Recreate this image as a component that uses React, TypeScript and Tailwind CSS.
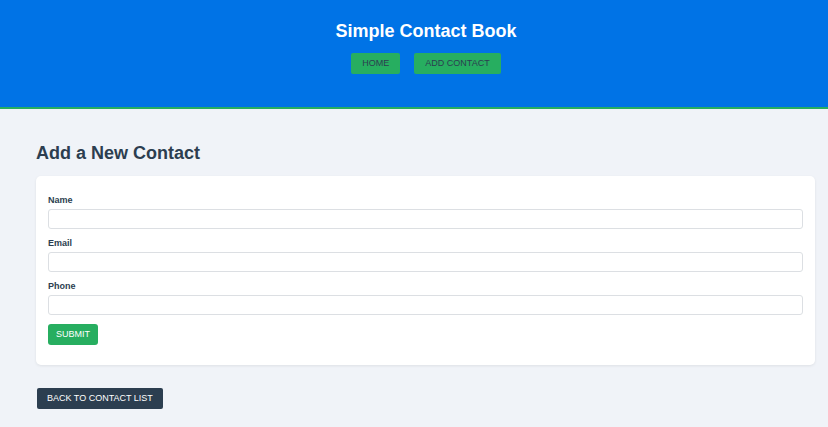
import { useState } from "react";

export default function App() {
  const [form, setForm] = useState({ name: "", email: "", phone: "" });

  const fields: { key: keyof typeof form; label: string; type: string }[] = [
    { key: "name", label: "Name", type: "text" },
    { key: "email", label: "Email", type: "email" },
    { key: "phone", label: "Phone", type: "tel" },
  ];

  return (
    <div
      className="min-h-[427px] bg-[#f0f3f8] text-[#2c3e50]"
      style={{ fontFamily: '"Liberation Sans", Arial, sans-serif' }}
    >
      {/* Header */}
      <header className="bg-[#0073e6] border-b-2 border-[#27ae60] pl-[24px] pt-[20px] pb-[33px] flex flex-col items-center">
        <h1 className="text-[18px] leading-[22px] font-bold text-white">
          Simple Contact Book
        </h1>
        <nav className="mt-[11px] flex gap-[14px]">
          <button className="h-[21px] px-[11px] bg-[#27ae60] rounded-[2px] text-[9px] uppercase text-[#2c3e50]">
            Home
          </button>
          <button className="h-[21px] px-[11px] bg-[#27ae60] rounded-[2px] text-[9px] uppercase text-[#2c3e50]">
            Add Contact
          </button>
        </nav>
      </header>

      {/* Main */}
      <main className="pl-[36px] pr-[13px] pt-[33px] pb-[18px]">
        <h2 className="text-[18px] leading-[22px] font-bold mb-[12px]">
          Add a New Contact
        </h2>

        <form
          className="bg-white rounded-[5px] shadow-[0_1px_3px_rgba(0,0,0,0.08)] px-[12px] pt-[19px] pb-[20px] flex flex-col"
          onSubmit={(e) => e.preventDefault()}
        >
          {fields.map((f, i) => (
            <div key={f.key} className={i > 0 ? "mt-[9px]" : ""}>
              <label className="block text-[9px] leading-[11px] font-bold mb-[3px]">
                {f.label}
              </label>
              <input
                type={f.type}
                value={form[f.key]}
                onChange={(e) => setForm({ ...form, [f.key]: e.target.value })}
                className="block w-full h-[20px] border border-[#dcdfe3] rounded-[3px] px-2 text-[9px] outline-none"
              />
            </div>
          ))}
          <button
            type="submit"
            className="self-start mt-[9px] h-[21px] px-[8px] bg-[#27ae60] rounded-[3px] text-[9px] uppercase text-white"
          >
            Submit
          </button>
        </form>

        <button className="mt-[23px] ml-[1px] h-[21px] px-[10px] bg-[#2c3e50] rounded-[2px] text-[9px] uppercase text-white">
          Back to Contact List
        </button>
      </main>
    </div>
  );
}
